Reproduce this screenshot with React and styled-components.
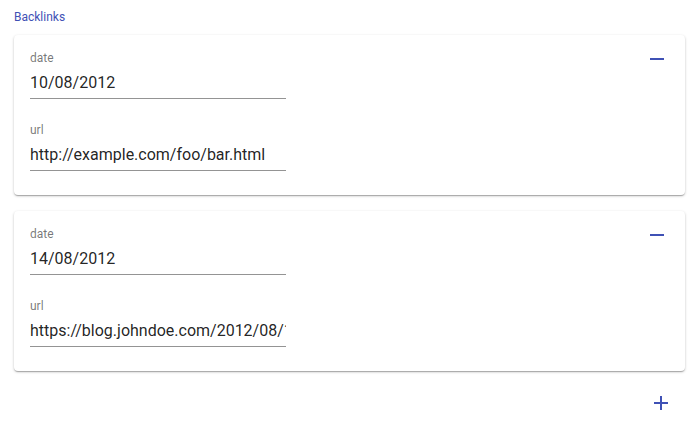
import React from "react";
import styled, { createGlobalStyle } from "styled-components";

const Global = createGlobalStyle`
  html, body { margin: 0; padding: 0; background: #fff; }
  body { font-family: Roboto, "Liberation Sans", Arial, sans-serif; }
`;

const Page = styled.div`
  padding: 10px 12px 0 14px;
  display: flex;
  flex-direction: column;
`;

const Title = styled.div`
  font-size: 12px;
  line-height: 14px;
  color: #3f51b5;
  margin-bottom: 11px;
`;

const List = styled.div`
  display: flex;
  flex-direction: column;
  gap: 16px;
`;

const Card = styled.div`
  background: #fff;
  border-radius: 4px;
  box-shadow: 0px 1px 3px 0px rgba(0, 0, 0, 0.2), 0px 1px 1px 0px rgba(0, 0, 0, 0.14),
    0px 2px 1px -1px rgba(0, 0, 0, 0.12);
  padding: 16px 16px 24px 16px;
  display: flex;
  align-items: flex-start;
`;

const Fields = styled.div`
  flex: 1;
  display: flex;
  flex-direction: column;
  gap: 24px;
`;

const Field = styled.label`
  display: flex;
  flex-direction: column;
  width: 256px;
`;

const Label = styled.span`
  font-size: 12px;
  line-height: 14px;
  color: rgba(0, 0, 0, 0.54);
`;

const InputWrap = styled.div`
  margin-top: 2px;
  padding: 6px 0;
  border-bottom: 1px solid rgba(0, 0, 0, 0.42);
`;

const Input = styled.input`
  display: block;
  width: 100%;
  height: 19px;
  border: none;
  outline: none;
  padding: 0;
  margin: 0;
  background: transparent;
  font-family: Roboto, "Liberation Sans", Arial, sans-serif;
  font-size: 16px;
  line-height: 19px;
  color: rgba(0, 0, 0, 0.87);
`;

const IconButton = styled.button`
  width: 24px;
  height: 24px;
  padding: 0;
  border: none;
  background: transparent;
  color: #3f51b5;
  display: flex;
  align-items: center;
  justify-content: center;
  cursor: pointer;
  margin-top: ${(p) => p.$offset || 0}px;
`;

const Footer = styled.div`
  display: flex;
  justify-content: flex-end;
  padding: 20px 12px 0 0;
`;

const RemoveIcon = () => (
  <svg width="24" height="24" viewBox="0 0 24 24" fill="currentColor">
    <path d="M19 13H5v-2h14v2z" />
  </svg>
);

const AddIcon = () => (
  <svg width="24" height="24" viewBox="0 0 24 24" fill="currentColor">
    <path d="M19 13h-6v6h-2v-6H5v-2h6V5h2v6h6v2z" />
  </svg>
);

const items = [
  { date: "10/08/2012", url: "http://example.com/foo/bar.html" },
  { date: "14/08/2012", url: "https://blog.johndoe.com/2012/08/12/foobar.html" },
];

export default function App() {
  return (
    <>
      <Global />
      <Page>
        <Title>Backlinks</Title>
        <List>
          {items.map((it, i) => (
            <Card key={i}>
              <Fields>
                <Field>
                  <Label>date</Label>
                  <InputWrap>
                    <Input defaultValue={it.date} />
                  </InputWrap>
                </Field>
                <Field>
                  <Label>url</Label>
                  <InputWrap>
                    <Input defaultValue={it.url} />
                  </InputWrap>
                </Field>
              </Fields>
              <IconButton $offset={-4} aria-label="remove">
                <RemoveIcon />
              </IconButton>
            </Card>
          ))}
        </List>
        <Footer>
          <IconButton aria-label="add">
            <AddIcon />
          </IconButton>
        </Footer>
      </Page>
    </>
  );
}
